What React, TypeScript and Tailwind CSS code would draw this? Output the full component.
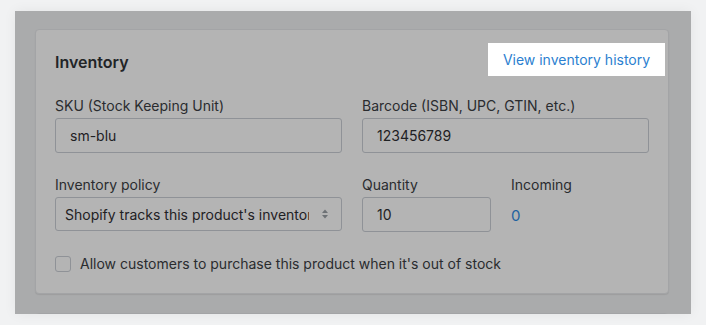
import React from 'react';

const font = { fontFamily: 'Inter, "Noto Sans", sans-serif' };

const Label = ({ children }: { children: React.ReactNode }) => (
    <div className="h-5 leading-5 text-[14px] text-[#2a2c2f] mb-[2px]">{children}</div>
);

const TextField = ({ value, className = '' }: { value: string; className?: string }) => (
    <div className={`h-[35px] flex items-center px-[14px] border border-[#8f9297] rounded-[3px] bg-[#b4b4b4] text-[14px] text-[#1f2124] ${className}`}>
        {value}
    </div>
);

export default function App() {
    return (
        <div className="w-[706px] h-[325px] bg-[#f1f2f3] pl-[15px] pt-[11px] overflow-hidden" style={font}>
            <div className="w-[676px] h-[303px] bg-[#aaabac] pl-[20px] pt-[18px] overflow-hidden shadow-[0_0_12px_rgba(0,0,0,0.06)]">
                <div className="relative w-[634px] h-[265px] bg-[#b4b4b4] rounded-[4px] border border-[#a3a4a6] shadow-[0_1px_1px_rgba(0,0,0,0.08)] px-[19px] pt-[20px]">
                    <div className="flex items-center justify-between h-[24px]">
                        <h2 className="text-[16px] font-semibold text-[#222427]">Inventory</h2>
                        <a className="absolute right-[3px] top-[13px] w-[177px] h-[33px] bg-white flex items-center justify-center text-[14px] text-[#2c7fd0]">
                            View inventory history
                        </a>
                    </div>

                    <div className="grid grid-cols-2 gap-x-5 mt-[22px]">
                        <div>
                            <Label>SKU (Stock Keeping Unit)</Label>
                            <TextField value="sm-blu" />
                        </div>
                        <div>
                            <Label>Barcode (ISBN, UPC, GTIN, etc.)</Label>
                            <TextField value="123456789" />
                        </div>
                    </div>

                    <div className="grid grid-cols-2 gap-x-5 mt-[22px]">
                        <div>
                            <Label>Inventory policy</Label>
                            <div className="h-[34px] flex items-center justify-between pl-[9px] pr-[12px] border border-[#8f9297] rounded-[3px] bg-[#b4b4b4] text-[14px] text-[#1f2124]">
                                <span className="whitespace-nowrap overflow-hidden">Shopify tracks this product's inventory</span>
                                <svg width="8" height="12" viewBox="0 0 8 12" className="shrink-0 ml-3">
                                    <path d="M4 1.5 L7 5 H1 Z" fill="#6d7175" />
                                    <path d="M4 10.5 L7 7 H1 Z" fill="#6d7175" />
                                </svg>
                            </div>
                        </div>
                        <div className="flex gap-5">
                            <div className="w-[129px]">
                                <Label>Quantity</Label>
                                <TextField value="10" />
                            </div>
                            <div>
                                <Label>Incoming</Label>
                                <div className="h-[35px] flex items-center pt-[4px] text-[15px] text-[#1f62a0]">0</div>
                            </div>
                        </div>
                    </div>

                    <label className="flex items-center gap-[9px] mt-[21px]">
                        <span className="w-4 h-4 border border-[#8f9297] rounded-[3px] bg-[#b4b4b4]" />
                        <span className="text-[14px] text-[#2a2c2f]">Allow customers to purchase this product when it's out of stock</span>
                    </label>
                </div>
                <div className="w-[634px] h-[40px] mt-[19px] bg-[#b4b4b4] rounded-[4px] border border-[#a3a4a6]" />
            </div>
        </div>
    );
}
